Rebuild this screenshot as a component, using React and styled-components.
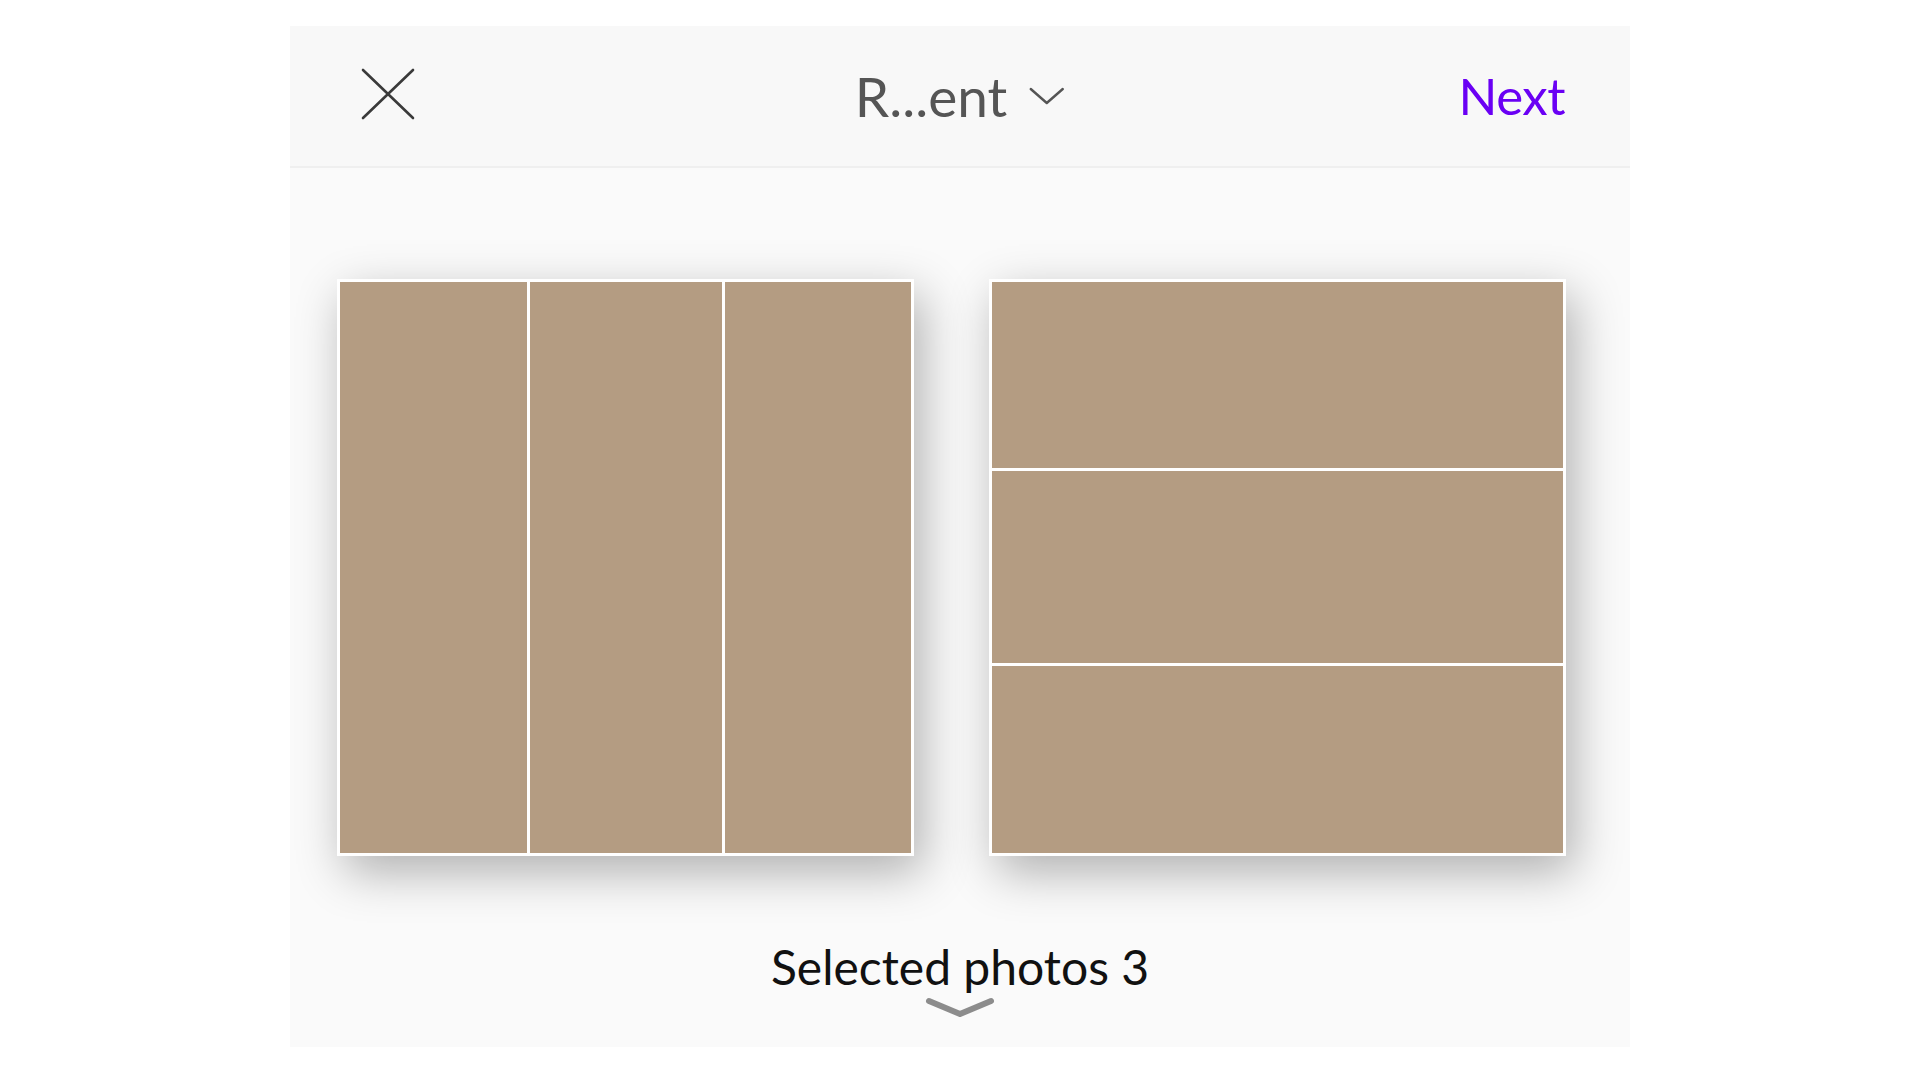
import React from "react";
import styled, { createGlobalStyle } from "styled-components";

const GlobalStyle = createGlobalStyle`
  html, body {
    margin: 0;
    padding: 0;
    background: #ffffff;
  }
  body {
    font-family: "Lato", "Noto Sans", sans-serif;
  }
`;

const CloseIcon = () => (
  <svg width="54" height="52" viewBox="0 0 54 52">
    <line x1="2" y1="2" x2="52" y2="50" stroke="#3a3a3a" strokeWidth="2.6" strokeLinecap="round" />
    <line x1="52" y1="2" x2="2" y2="50" stroke="#3a3a3a" strokeWidth="2.6" strokeLinecap="round" />
  </svg>
);

const SmallChevron = () => (
  <svg width="36" height="20" viewBox="0 0 36 20">
    <polyline points="2,3 18,17 34,3" fill="none" stroke="#555" strokeWidth="2.4" strokeLinecap="round" strokeLinejoin="round" />
  </svg>
);

const HandleChevron = () => (
  <svg width="70" height="22" viewBox="0 0 70 22">
    <polyline points="4,4 35,17 66,4" fill="none" stroke="#8c8c8c" strokeWidth="6" strokeLinecap="round" strokeLinejoin="round" />
  </svg>
);

const App = () => {
  return (
    <>
      <GlobalStyle />
      <Panel>
        <Header>
          <IconButton>
            <CloseIcon />
          </IconButton>
          <AlbumPicker>
            <AlbumName>R...ent</AlbumName>
            <SmallChevron />
          </AlbumPicker>
          <NextButton>Next</NextButton>
        </Header>
        <Body>
          <LayoutRow>
            <LayoutCard $direction="columns">
              <Cell />
              <Cell />
              <Cell />
            </LayoutCard>
            <LayoutCard $direction="rows">
              <Cell />
              <Cell />
              <Cell />
            </LayoutCard>
          </LayoutRow>
          <Footer>
            <SelectedLabel>Selected photos 3</SelectedLabel>
            <HandleChevron />
          </Footer>
        </Body>
      </Panel>
    </>
  );
};

export default App;

const Panel = styled.div`
  width: 1340px;
  height: 1021px;
  margin: 26px auto 0;
  background: #fafafa;
  display: flex;
  flex-direction: column;
  overflow: hidden;
`;

const Header = styled.div`
  height: 140px;
  flex-shrink: 0;
  background: #f8f8f8;
  border-bottom: 2px solid #efefef;
  display: flex;
  align-items: center;
  justify-content: space-between;
  padding: 0 65px 0 71px;
  position: relative;
`;

const IconButton = styled.div`
  width: 54px;
  height: 52px;
  display: flex;
  margin-top: -4px;
`;

const AlbumPicker = styled.div`
  position: absolute;
  left: 50%;
  top: 50%;
  transform: translate(-50%, -50%);
  display: flex;
  align-items: center;
  gap: 22px;
`;

const AlbumName = styled.span`
  font-size: 55px;
  color: #555555;
`;

const NextButton = styled.span`
  font-size: 51px;
  letter-spacing: -0.5px;
  color: #6a00f4;
  margin-top: -2px;
`;

const Body = styled.div`
  flex: 1;
  display: flex;
  flex-direction: column;
`;

const LayoutRow = styled.div`
  display: flex;
  gap: 75px;
  padding: 111px 0 0 47px;
`;

const LayoutCard = styled.div`
  width: 577px;
  height: 577px;
  box-sizing: border-box;
  background: #ffffff;
  padding: 3px;
  display: grid;
  gap: 3px;
  grid-template-columns: ${(p) => (p.$direction === "columns" ? "190fr 196fr 189fr" : "1fr")};
  grid-template-rows: ${(p) => (p.$direction === "rows" ? "189fr 196fr 190fr" : "1fr")};
  box-shadow: 8px 16px 45px rgba(0, 0, 0, 0.3);
`;

const Cell = styled.div`
  background: #b49c82;
`;

const Footer = styled.div`
  display: flex;
  flex-direction: column;
  align-items: center;
  padding-top: 82px;
  gap: 2px;
`;

const SelectedLabel = styled.span`
  font-size: 48px;
  color: #111111;
`;
